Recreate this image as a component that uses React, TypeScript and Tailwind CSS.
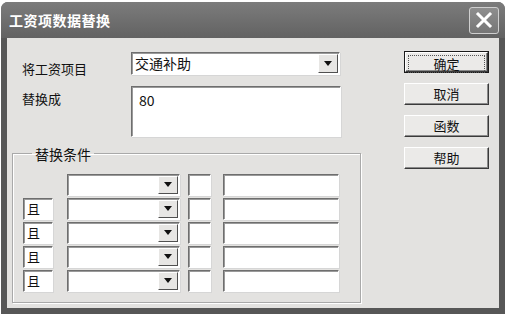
// App.tsx
import React from 'react';

const field =
  'bg-white border border-t-[#6e6e6e] border-l-[#6e6e6e] border-r-white border-b-white shadow-[inset_1px_1px_0_#9a9a9a,1px_1px_0_#d6d6d6]';

const Arrow: React.FC = () => (
  <svg width="8" height="5" viewBox="0 0 8 5">
    <path d="M0 0 H8 L4 5 Z" fill="#111" />
  </svg>
);

const Combo: React.FC<{ w: string; h: string; value?: string }> = ({ w, h, value }) => (
  <div className={`${w} ${h} ${field} flex items-stretch`}>
    <div className="flex-1 flex items-center pl-[3px] text-[14px] text-[#111]">{value}</div>
    <div className="w-[20px] m-[1px] bg-[#e7e6e4] border border-t-white border-l-white border-r-[#505050] border-b-[#505050] flex items-center justify-center">
      <Arrow />
    </div>
  </div>
);

const Button: React.FC<{ label: string; main?: boolean }> = ({ label, main }) => (
  <div
    className={`w-[85px] h-[22px] ${main ? 'border border-[#1a1a1a]' : ''} bg-[#ebeae8]`}
  >
    <div className="h-full border border-t-white border-l-white border-r-[#3a3a3a] border-b-[#3a3a3a] shadow-[inset_-1px_-1px_0_#8a8a8a]">
      <div
        className={`h-full flex items-center justify-center text-[13px] text-[#111] ${
          main ? 'm-[2px] h-[calc(100%-4px)] border border-dotted border-[#555]' : ''
        }`}
      >
        {label}
      </div>
    </div>
  </div>
);

const CondRow: React.FC<{ first?: boolean }> = ({ first }) => (
  <div className="flex items-stretch h-[22px]">
    {first ? (
      <div className="w-[30px]" />
    ) : (
      <div className={`w-[30px] ${field} flex items-center pl-[3px] text-[13px] text-[#111]`}>且</div>
    )}
    <div className="ml-[14px]">
      <Combo w="w-[113px]" h="h-[22px]" />
    </div>
    <div className={`ml-[8px] w-[23px] ${field}`} />
    <div className={`ml-[12px] w-[116px] ${field}`} />
  </div>
);

const App: React.FC = () => {
  return (
    <div className="w-[506px] h-[315px] bg-white pt-[2px] pl-[1px] font-['Noto_Sans_CJK_SC','Noto_Sans',sans-serif]">
      <div className="w-[504px] h-[312px] rounded-t-[7px] bg-[#575757] flex flex-col">
        {/* title bar */}
        <div className="h-[36px] rounded-t-[7px] bg-gradient-to-b from-[#7c7c7c] to-[#626262] flex items-center justify-between pl-[8px] pr-[6px]">
          <span className="text-white font-bold text-[14px] tracking-[0.5px]">工资项数据替换</span>
          <div className="w-[30px] h-[27px] rounded-[3px] border border-[#cfcfcf] bg-gradient-to-b from-[#8e8e8e] to-[#767676] flex items-center justify-center">
            <svg width="18" height="18" viewBox="0 0 18 18">
              <path d="M3 3 L15 15 M15 3 L3 15" stroke="#fff" strokeWidth="3" strokeLinecap="square" />
            </svg>
          </div>
        </div>

        {/* body */}
        <div className="h-[270px] mx-[6px] bg-[#e3e2e0] flex">
          <div className="pl-[5px] pt-[14px] w-[354px]">
            <div className="flex items-start ml-[10px]">
              <span className="w-[109px] pt-[7px] text-[13px] text-[#111]">将工资项目</span>
              <Combo w="w-[209px]" h="h-[23px]" value="交通补助" />
            </div>
            <div className="flex items-start ml-[10px] mt-[7px]">
              <span className="w-[109px] pt-[3px] text-[13px] text-[#111]">替换成</span>
              <div className={`w-[210px] h-[51px] ${field} pl-[7px] pt-[3px] text-[14px] text-[#111]`}>80</div>
            </div>

            <fieldset className="mt-[7px] w-[349px] h-[159px] border border-[#a9a9a9] shadow-[inset_1px_1px_0_#fff,1px_1px_0_#fff] pl-[10px]">
              <legend className="ml-[9px] px-[3px] text-[14px] leading-[20px] text-[#111]">替换条件</legend>
              <div className="mt-[10px] flex flex-col gap-[2px]">
                <CondRow first />
                <CondRow />
                <CondRow />
                <CondRow />
                <CondRow />
              </div>
            </fieldset>
          </div>

          <div className="ml-[43px] pt-[13px] flex flex-col gap-[10px]">
            <Button label="确定" main />
            <Button label="取消" />
            <Button label="函数" />
            <Button label="帮助" />
          </div>
        </div>
      </div>
    </div>
  );
};

export default App;
